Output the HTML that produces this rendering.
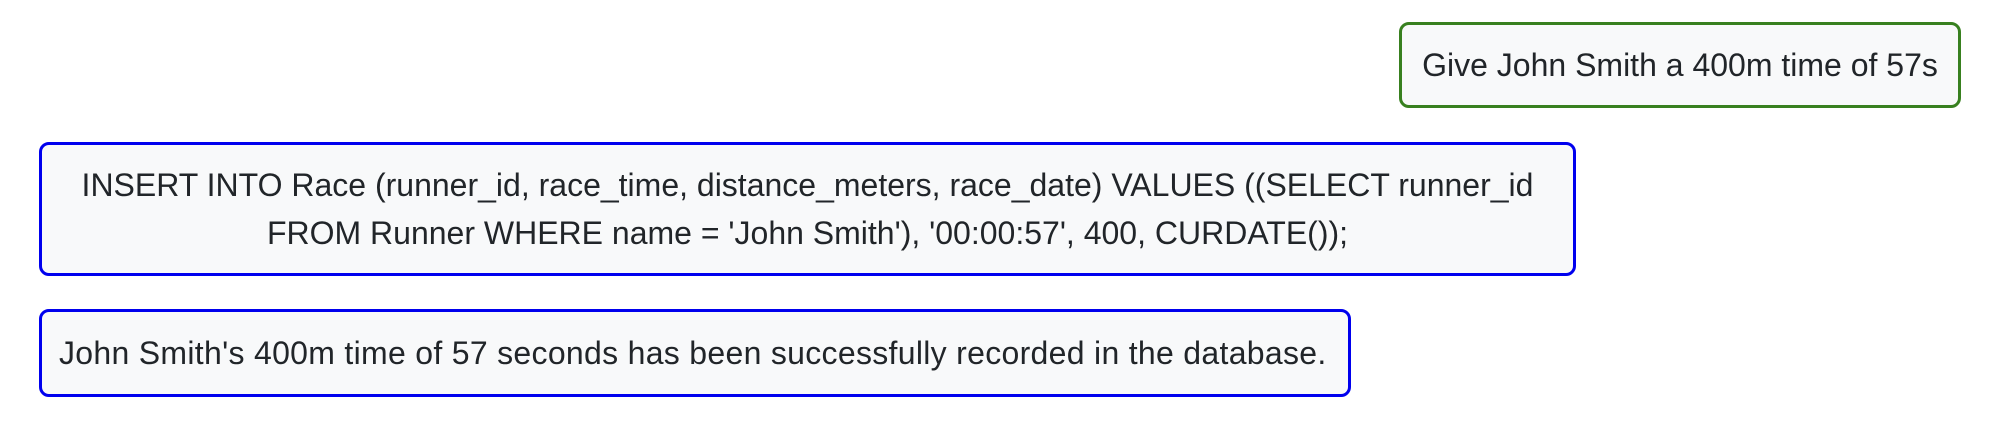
<!DOCTYPE html>
<html><head><style>
html,body{margin:0;padding:0;background:#fff;width:1994px;height:434px;overflow:hidden}
body{font-family:"Liberation Sans",Arial,sans-serif;font-size:32px;line-height:48px;color:#212529;position:relative}
.b{position:absolute;box-sizing:border-box;background:#f8f9fa;border:3px solid #0000ee;border-radius:10px;padding:16px 17px;white-space:nowrap}
.g{border-color:#38801f;left:1399px;top:22px;width:562px;height:86px;text-align:center;padding:16px 0}
.q{left:39px;top:142px;width:1537px;height:134px;text-align:center}
.r{left:39px;top:309px;width:1312px;height:88px;padding-top:17px;letter-spacing:0.3px}
</style></head><body>
<div class="b g">Give John Smith a 400m time of 57s</div>
<div class="b q">INSERT INTO Race (runner_id, race_time, distance_meters, race_date) VALUES ((SELECT runner_id<br>FROM Runner WHERE name = 'John Smith'), '00:00:57', 400, CURDATE());</div>
<div class="b r">John Smith's 400m time of 57 seconds has been successfully recorded in the database.</div>
</body></html>
